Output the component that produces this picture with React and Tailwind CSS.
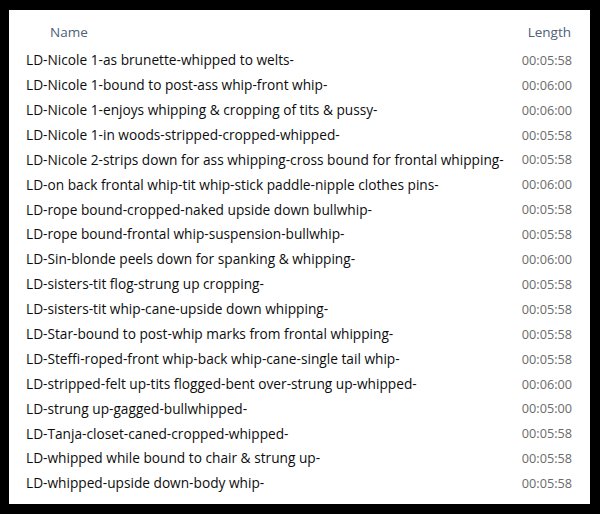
import React from 'react';

const rows = [
  ['LD-Nicole 1-as brunette-whipped to welts-', '00:05:58'],
  ['LD-Nicole 1-bound to post-ass whip-front whip-', '00:06:00'],
  ['LD-Nicole 1-enjoys whipping & cropping of tits & pussy-', '00:06:00'],
  ['LD-Nicole 1-in woods-stripped-cropped-whipped-', '00:05:58'],
  ['LD-Nicole 2-strips down for ass whipping-cross bound for frontal whipping-', '00:05:58'],
  ['LD-on back frontal whip-tit whip-stick paddle-nipple clothes pins-', '00:06:00'],
  ['LD-rope bound-cropped-naked upside down bullwhip-', '00:05:58'],
  ['LD-rope bound-frontal whip-suspension-bullwhip-', '00:05:58'],
  ['LD-Sin-blonde peels down for spanking & whipping-', '00:06:00'],
  ['LD-sisters-tit flog-strung up cropping-', '00:05:58'],
  ['LD-sisters-tit whip-cane-upside down whipping-', '00:05:58'],
  ['LD-Star-bound to post-whip marks from frontal whipping-', '00:05:58'],
  ['LD-Steffi-roped-front whip-back whip-cane-single tail whip-', '00:05:58'],
  ['LD-stripped-felt up-tits flogged-bent over-strung up-whipped-', '00:06:00'],
  ['LD-strung up-gagged-bullwhipped-', '00:05:00'],
  ['LD-Tanja-closet-caned-cropped-whipped-', '00:05:58'],
  ['LD-whipped while bound to chair & strung up-', '00:05:58'],
  ['LD-whipped-upside down-body whip-', '00:05:58'],
];

export default function App() {
  return (
    <div className="w-[600px] h-[514px] bg-black pt-[10px] pl-[9px] font-['Open_Sans',sans-serif]">
      <div className="w-[581px] h-[494px] bg-white pl-[17px] pr-[17px]">
        <div className="flex justify-between items-center h-[38px] pt-[6px] text-[13.5px] text-[#4d6178]">
          <span className="pl-[24px]">Name</span>
          <span className="pr-[2px]">Length</span>
        </div>
        {rows.map(([name, len]) => (
          <div key={name} className="flex justify-between items-center h-[24.9px]">
            <span className="text-[13.7px] text-[#0d0d0d]">{name}</span>
            <span className="text-[12.7px] text-[#6a6a6a] pr-[1px]">{len}</span>
          </div>
        ))}
      </div>
    </div>
  );
}
